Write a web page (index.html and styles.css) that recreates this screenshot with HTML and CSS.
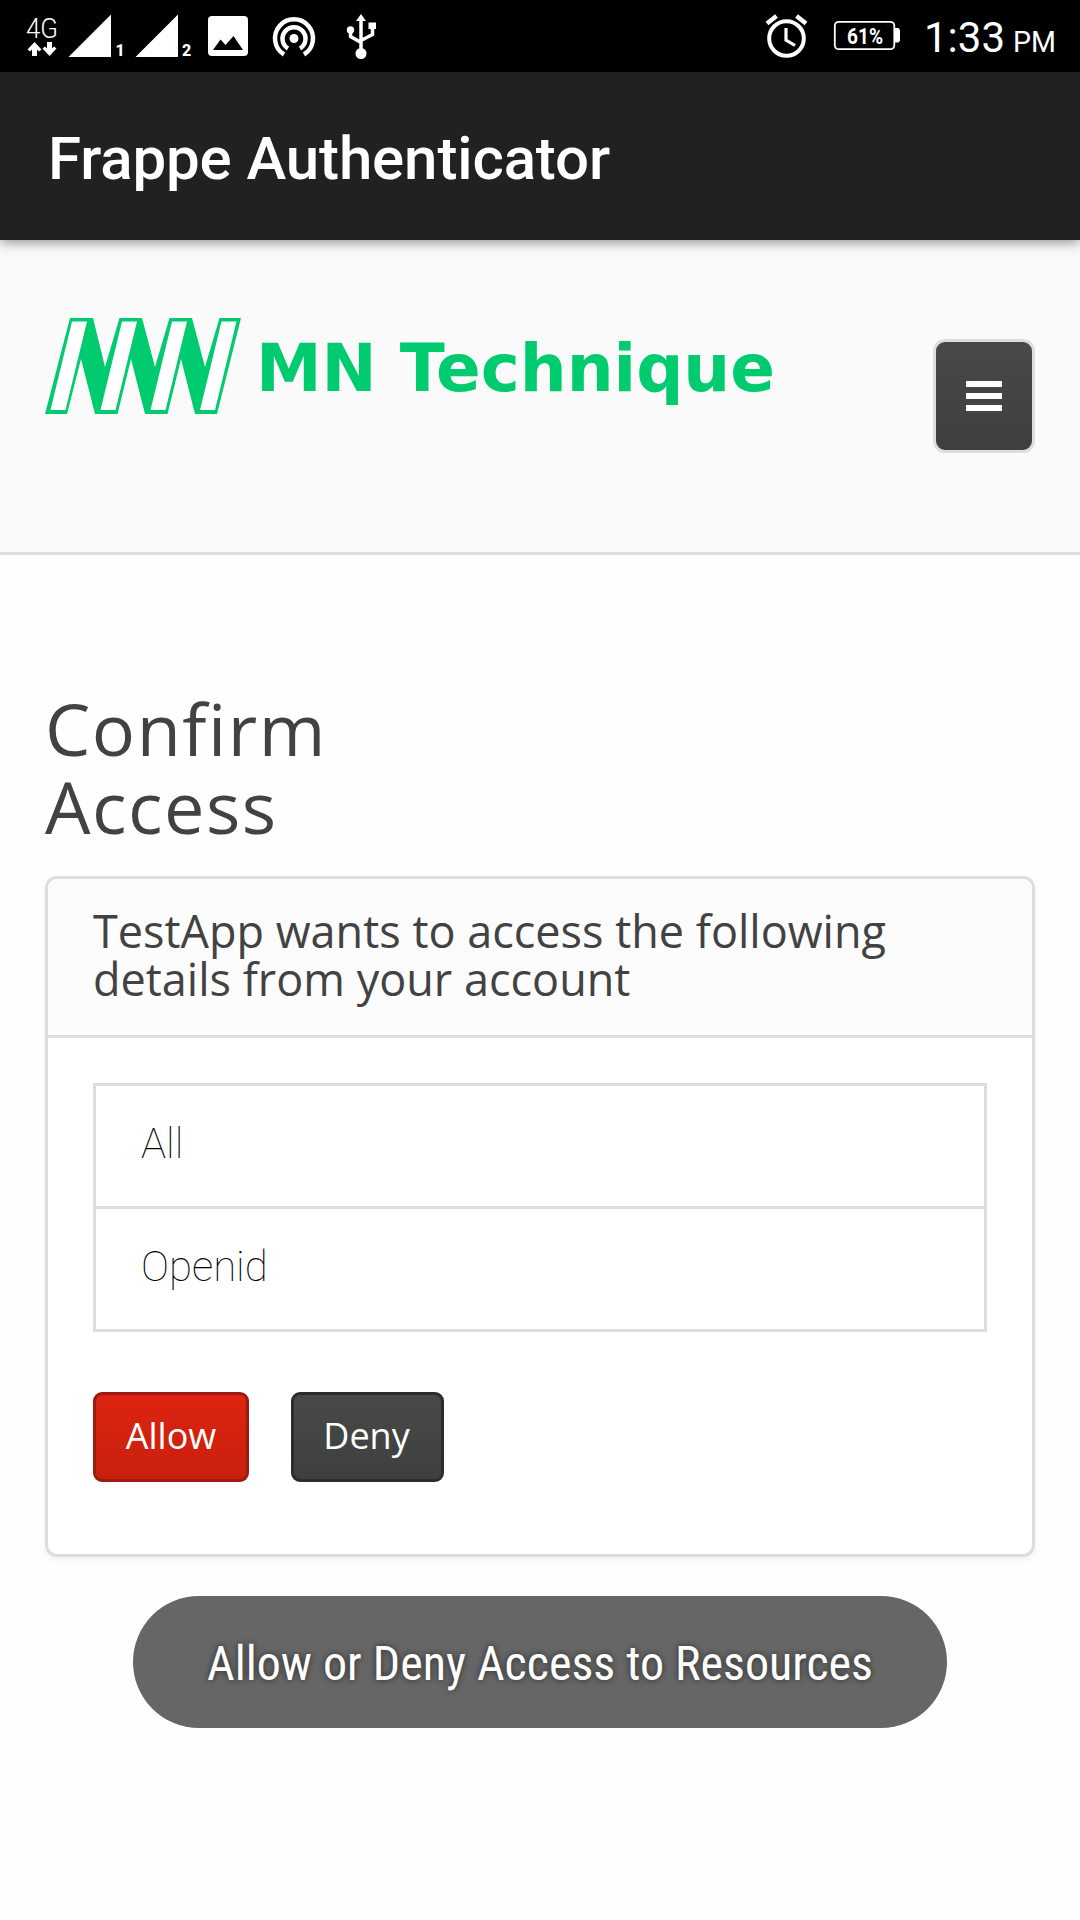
FILE: index.html
```
<!DOCTYPE html>
<html lang="en">
<head>
<meta charset="utf-8">
<title>Frappe Authenticator</title>
<link rel="stylesheet" href="styles.css">
</head>
<body>
<div class="status-bar">
  <svg class="status-icons" width="400" height="72" viewBox="0 0 400 72" fill="#fff">
    <text class="net" x="26" y="37.500" textLength="32" lengthAdjust="spacingAndGlyphs">4G</text>
    <path d="M34.500 42l7 7.500-2.500 2-2-2v6.500h-5v-6.500l-2 2-2.500-2zM49.500 56l-7-7.500 2.500-2 2 2V42h5v6.500l2-2 2.500 2z"/>
    <path d="M68.500 57L111 14.500V57zM135.500 57L178 14.500V57z"/>
    <text class="sim" x="115.500" y="55.500">1</text>
    <text class="sim" x="182" y="55.500">2</text>
    <path fill-rule="evenodd" d="M212 16h32q4 0 4 4v32q0 4-4 4h-32q-4 0-4-4V20q0-4 4-4zm1 34h30l-9.500-14-8 9-5-5.500z"/>
    <circle cx="294" cy="38.500" r="4.500"/>
    <g fill="none" stroke="#fff" stroke-width="4.500">
      <path d="M288 48.500a11.500 11.500 0 1 1 12 0M284 54.500a19 19 0 1 1 20 0"/>
    </g>
    <path d="M361 14l5 7h-10zM368.500 22.500h7.500V29h-7.500z"/>
    <circle cx="350.500" cy="30" r="3.700"/><circle cx="361" cy="53.500" r="5.500"/>
    <path d="M361 20v33M350.500 30v6.500l10.500 6M372.500 28v6.500L361 40.500" fill="none" stroke="#fff" stroke-width="3.500"/>
  </svg>
  <svg class="status-icons" width="340" height="72" viewBox="740 0 340 72" fill="#fff">
    <circle cx="786.500" cy="38.500" r="17.300" fill="none" stroke="#fff" stroke-width="4"/>
    <path d="M786 28v12l9 5.500" fill="none" stroke="#fff" stroke-width="3.200"/>
    <path d="M767 23.500l9.500-7.500M806 23.500l-9.500-7.500" stroke="#fff" stroke-width="4.500"/>
    <rect x="834.800" y="21.800" width="59.500" height="27.400" rx="4" fill="none" stroke="#fff" stroke-width="1.800"/>
    <path d="M895 28h3.500l1.500 2v10.500l-1.500 2H895z"/>
    <text class="pct" x="847" y="43.500" textLength="36" lengthAdjust="spacingAndGlyphs">61%</text>
    <text class="clock" x="924" y="52" textLength="81" lengthAdjust="spacing">1:33</text>
    <text class="ampm" x="1013" y="52" textLength="43" lengthAdjust="spacingAndGlyphs">PM</text>
  </svg>
</div>
<header class="app-bar">Frappe Authenticator</header>
<nav class="site-nav">
  <svg class="logo" width="729" height="96" viewBox="0 0 729 96">
    <path fill="#00cc6f" d="M25 0h23l12 49L74.500 0H97l13 49L124.500 0H147l13 49L174.500 0H196l-24 96h-22l-14-55-13.500 55H100L86 41 72.500 96H50L36 41 22 96H0z"/>
    <path fill="#fff" d="M27 3.500h15L20.500 92H5.500zM77 3.500h15L70.500 92h-15zM127 3.500h15L120.500 92h-15zM176.500 3.500h15L170 92h-15z"/>
    <text class="brand" x="211" y="73" textLength="519" lengthAdjust="spacingAndGlyphs">MN Technique</text>
  </svg>
  <button class="menu-toggle" aria-label="Menu"><span></span><span></span><span></span></button>
</nav>
<main class="page">
  <h1 class="title">Confirm<br>Access</h1>
  <section class="panel">
    <h2 class="panel-head">TestApp wants to access the following<br>details from your account</h2>
    <div class="panel-body">
      <ul class="scopes"><li>All</li><li>Openid</li></ul>
      <div class="actions">
        <button class="btn allow">Allow</button>
        <button class="btn deny">Deny</button>
      </div>
    </div>
  </section>
  <div class="toast">Allow or Deny Access to Resources</div>
</main>
</body>
</html>
```
FILE: styles.css
```
* { box-sizing: border-box; margin: 0; padding: 0; }
body { width: 1080px; height: 1920px; background: #fefefe; font-family: "Open Sans", "Noto Sans", sans-serif; color: #424242; overflow: hidden; }
.status-bar { height: 72px; background: #000; display: flex; justify-content: space-between; }
.status-icons { display: block; font-family: Roboto, sans-serif; }
.net { font-size: 28px; font-weight: 300; }
.sim { font-size: 16px; font-weight: 800; }
.pct { font-size: 22px; font-weight: 700; }
.clock { font-size: 42px; }
.ampm { font-size: 29px; }
.app-bar { position: relative; height: 168px; padding-left: 48px; background: #212121; color: #fff; font: 500 60px/174px Roboto, sans-serif; letter-spacing: -.12px; box-shadow: 0 2px 12px rgba(0, 0, 0, .45); }
.site-nav { height: 315px; padding: 78px 45px 0; display: flex; justify-content: space-between; align-items: flex-start; background: #fafafa; border-bottom: 3px solid #ddd; }
.logo { display: block; overflow: hidden; }
.brand { font: 700 66px "DejaVu Sans", sans-serif; fill: #00cc6f; }
.menu-toggle { width: 102px; height: 114px; margin-top: 21px; border: 3px solid #ddd; border-radius: 12px; background: linear-gradient(#484a48, #3e403f); display: flex; flex-direction: column; align-items: center; justify-content: center; gap: 6px; }
.menu-toggle span { width: 36px; height: 6px; background: #fff; }
.page { padding: 134px 45px 0; }
.title { font-weight: 400; font-size: 72px; line-height: 78px; letter-spacing: 1.5px; }
.panel { margin-top: 31px; height: 681px; border: 3px solid #ddd; border-radius: 12px; background: #fff; box-shadow: 0 3px 6px rgba(0, 0, 0, .05); overflow: hidden; }
.panel-head { height: 159px; padding: 28px 45px 0; background: #fcfcfc; border-bottom: 3px solid #ddd; font-weight: 400; font-size: 45px; line-height: 48px; white-space: nowrap; }
.panel-body { padding: 45px; }
.scopes { list-style: none; border: 3px solid #ddd; }
.scopes li { height: 120px; padding-left: 45px; font: 100 42px/116px Roboto, sans-serif; color: #000; }
.scopes li + li { height: 123px; border-top: 3px solid #ddd; }
.actions { display: flex; gap: 42px; margin-top: 60px; }
.btn { height: 90px; padding-bottom: 3px; border: 3px solid; border-radius: 9px; color: #fff; font: 400 36px "Open Sans", "Noto Sans", sans-serif; }
.allow { width: 156px; border-color: #9c1b10; background: linear-gradient(#dd2410, #c8200d); }
.deny { width: 153px; padding-right: 2px; border-color: #2b2d2c; background: linear-gradient(#484a48, #3e403f); }
.toast { width: 814px; height: 132px; margin: 39px 0 0 88px; padding-top: 2px; border-radius: 66px; background: #666; color: #fff; display: flex; align-items: center; justify-content: center; font: 400 48px Roboto, sans-serif; font-stretch: 75%; text-shadow: 0 0 6px rgba(0, 0, 0, .6); white-space: nowrap; }
```
